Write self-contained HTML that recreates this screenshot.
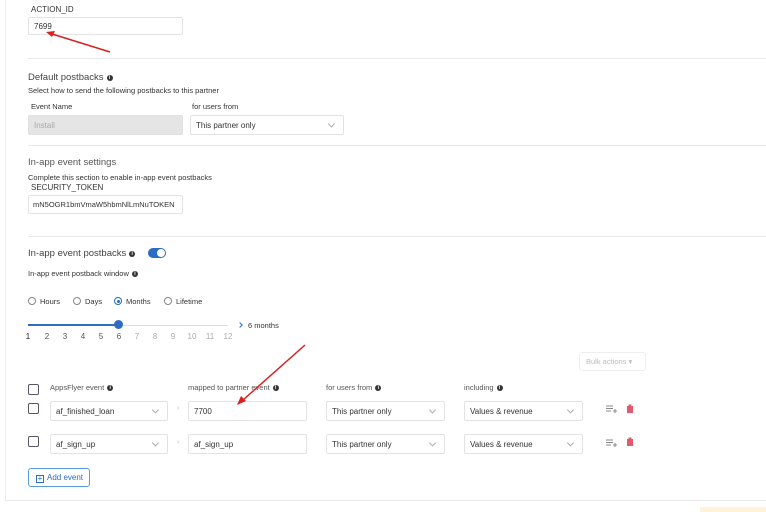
<!DOCTYPE html>
<html><head><meta charset="utf-8"><style>
*{margin:0;padding:0;box-sizing:border-box}
body{width:766px;height:512px;overflow:hidden;background:#fff;font-family:"Liberation Sans",sans-serif;color:#333;position:relative}
.a{position:absolute;white-space:nowrap}
.t8{font-size:8px}.t7{font-size:7.5px}.t9{font-size:9.5px;color:#444}
.inp{position:absolute;border:1px solid #e3e3e3;border-radius:2px;background:#fff;font-size:8px;padding-left:5px;display:flex;align-items:center;color:#333;overflow:hidden}
.sel::after{content:"";position:absolute;right:9px;top:50%;width:4px;height:4px;border-right:1px solid #aaa;border-bottom:1px solid #aaa;transform:translateY(-70%) rotate(45deg)}
.hr{position:absolute;left:28px;right:0;height:1px;background:#e8e8e8}
.info{display:inline-block;width:6px;height:6px;border-radius:50%;background:#333;color:#fff;font-size:5px;line-height:6px;text-align:center;font-weight:bold;vertical-align:1px;margin-left:3px}
.cb{position:absolute;width:11px;height:11px;border:1px solid #556;border-radius:2px}
.rad{position:absolute;width:8px;height:8px;border:1px solid #888;border-radius:50%}
.num{position:absolute;top:332px;font-size:8px;color:#555;width:10px;text-align:center}
</style></head><body>
<div class="a" style="left:5px;top:0;width:1px;height:500px;background:#ececec"></div>
<div class="a t8" style="left:31px;top:5px">ACTION_ID</div>
<div class="inp" style="left:28px;top:17px;width:155px;height:18px">7699</div>
<div class="hr" style="top:58px"></div>
<div class="a t9" style="left:28px;top:72px">Default postbacks<span class="info">i</span></div>
<div class="a t7" style="left:28px;top:86px">Select how to send the following postbacks to this partner</div>
<div class="a t7" style="left:31px;top:102px">Event Name</div>
<div class="a t7" style="left:192px;top:102px">for users from</div>
<div class="inp" style="left:28px;top:115px;width:155px;height:20px;background:#e5e5e5;color:#aaa;border-color:#e0e0e0">Install</div>
<div class="inp sel" style="left:190px;top:115px;width:154px;height:20px">This partner only</div>
<div class="hr" style="top:145px"></div>
<div class="a t9" style="left:28px;top:157px;color:#555">In-app event settings</div>
<div class="a t7" style="left:28px;top:173px">Complete this section to enable in-app event postbacks</div>
<div class="a t8" style="left:31px;top:183px">SECURITY_TOKEN</div>
<div class="inp" style="left:28px;top:195px;width:155px;height:19px;font-size:7.5px;padding-left:4px">mN5OGR1bmVmaW5hbmNlLmNuTOKEN</div>
<div class="hr" style="top:236px"></div>
<div class="a t9" style="left:28px;top:248px">In-app event postbacks<span class="info">i</span></div>
<div class="a" style="left:148px;top:248px;width:18px;height:10px;border-radius:5px;background:#2b6cc4"><div style="position:absolute;right:1px;top:1px;width:8px;height:8px;border-radius:50%;background:#fff"></div></div>
<div class="a t7" style="left:28px;top:269px">In-app event postback window<span class="info">i</span></div>
<div class="rad" style="left:28px;top:297px"></div><div class="a t7" style="left:40px;top:297px">Hours</div>
<div class="rad" style="left:73px;top:297px"></div><div class="a t7" style="left:85px;top:297px">Days</div>
<div class="rad" style="left:114px;top:297px;border-color:#2b6cc4"><div style="margin:1.5px;width:3px;height:3px;border-radius:50%;background:#2b6cc4"></div></div><div class="a t7" style="left:126px;top:297px">Months</div>
<div class="rad" style="left:164px;top:297px"></div><div class="a t7" style="left:176px;top:297px">Lifetime</div>
<div class="a" style="left:28px;top:325px;width:200px;height:1px;background:#ddd"></div>
<div class="a" style="left:28px;top:324px;width:91px;height:2px;background:#2b6cc4"></div>
<div class="a" style="left:114px;top:320px;width:9px;height:9px;border-radius:50%;background:#2b6cc4"></div>
<div class="num" style="left:23px;color:#222">1</div><div class="num" style="left:42px">2</div><div class="num" style="left:60px">3</div><div class="num" style="left:78px">4</div><div class="num" style="left:96px">5</div><div class="num" style="left:114px">6</div><div class="num" style="left:132px;color:#aaa">7</div><div class="num" style="left:150px;color:#aaa">8</div><div class="num" style="left:168px;color:#aaa">9</div><div class="num" style="left:187px;color:#aaa">10</div><div class="num" style="left:205px;color:#aaa">11</div><div class="num" style="left:223px;color:#aaa">12</div>
<div class="a" style="left:238px;top:323px;width:4px;height:4px;border-right:1px solid #2b6cc4;border-top:1px solid #2b6cc4;transform:rotate(45deg)"></div>
<div class="a t7" style="left:248px;top:321px">6 months</div>
<div class="a" style="left:579px;top:352px;width:67px;height:19px;border:1px solid #eee;border-radius:3px;font-size:7.5px;color:#bbb;padding:4px 0 0 6px">Bulk actions ▾</div>
<div class="cb" style="left:28px;top:384px"></div>
<div class="a t7" style="left:50px;top:383px;color:#555">AppsFlyer event<span class="info">i</span></div>
<div class="a t7" style="left:188px;top:383px;color:#555">mapped to partner event<span class="info">i</span></div>
<div class="a t7" style="left:326px;top:383px;color:#555">for users from<span class="info">i</span></div>
<div class="a t7" style="left:464px;top:383px;color:#555">including<span class="info">i</span></div>

<div class="cb" style="left:28px;top:403px"></div>
<div class="inp sel" style="left:50px;top:401px;width:118px;height:20px">af_finished_loan</div>
<div class="a" style="left:177px;top:405px;font-size:7px;color:#bbb">›</div>
<div class="inp" style="left:188px;top:401px;width:119px;height:20px">7700</div>
<div class="inp sel" style="left:326px;top:401px;width:119px;height:20px">This partner only</div>
<div class="inp sel" style="left:464px;top:401px;width:119px;height:20px">Values &amp; revenue</div>

<div class="cb" style="left:28px;top:436px"></div>
<div class="inp sel" style="left:50px;top:434px;width:118px;height:20px">af_sign_up</div>
<div class="a" style="left:177px;top:439px;font-size:7px;color:#bbb">›</div>
<div class="inp" style="left:188px;top:434px;width:119px;height:20px">af_sign_up</div>
<div class="inp sel" style="left:326px;top:434px;width:119px;height:20px">This partner only</div>
<div class="inp sel" style="left:464px;top:434px;width:119px;height:20px">Values &amp; revenue</div>

<svg class="a" style="left:605px;top:405px" width="12" height="8"><path d="M1 1h7M1 3.5h7M1 6h5M8 6h4M10 4v4" stroke="#888" stroke-width="1" fill="none"/></svg>
<svg class="a" style="left:626px;top:404px" width="8" height="10"><rect x="1" y="2" width="6" height="7" fill="#e25a6d"/><rect x="2.5" y="0.5" width="3" height="1.5" fill="#e25a6d"/></svg>
<svg class="a" style="left:605px;top:439px" width="12" height="8"><path d="M1 1h7M1 3.5h7M1 6h5M8 6h4M10 4v4" stroke="#888" stroke-width="1" fill="none"/></svg>
<svg class="a" style="left:626px;top:437px" width="8" height="10"><rect x="1" y="2" width="6" height="7" fill="#e25a6d"/><rect x="2.5" y="0.5" width="3" height="1.5" fill="#e25a6d"/></svg>

<div class="a" style="left:28px;top:468px;width:62px;height:19px;border:1px solid #5b9be0;border-radius:3px;font-size:8px;color:#2b6cc4;padding:4px 0 0 7px"><span style="display:inline-block;width:8px;height:8px;border:1px solid #2b6cc4;vertical-align:-1px;font-size:8px;line-height:5px;text-align:center;margin-right:3px">+</span>Add event</div>
<div class="a" style="left:5px;top:500px;width:761px;height:1px;background:#e8e8e8"></div>
<div class="a" style="left:700px;top:507px;width:66px;height:5px;background:#fdf3d6"></div>

<svg class="a" style="left:0;top:0" width="766" height="512">
<g stroke="#d9201f" stroke-width="1.5" fill="#d9201f">
<line x1="110" y1="52" x2="52" y2="34"/><path d="M46 32l9-1-3 6z" stroke="none"/>
<line x1="305" y1="345" x2="243" y2="400"/><path d="M237 405l4-9 5 5z" stroke="none"/>
</g></svg>
</body></html>
